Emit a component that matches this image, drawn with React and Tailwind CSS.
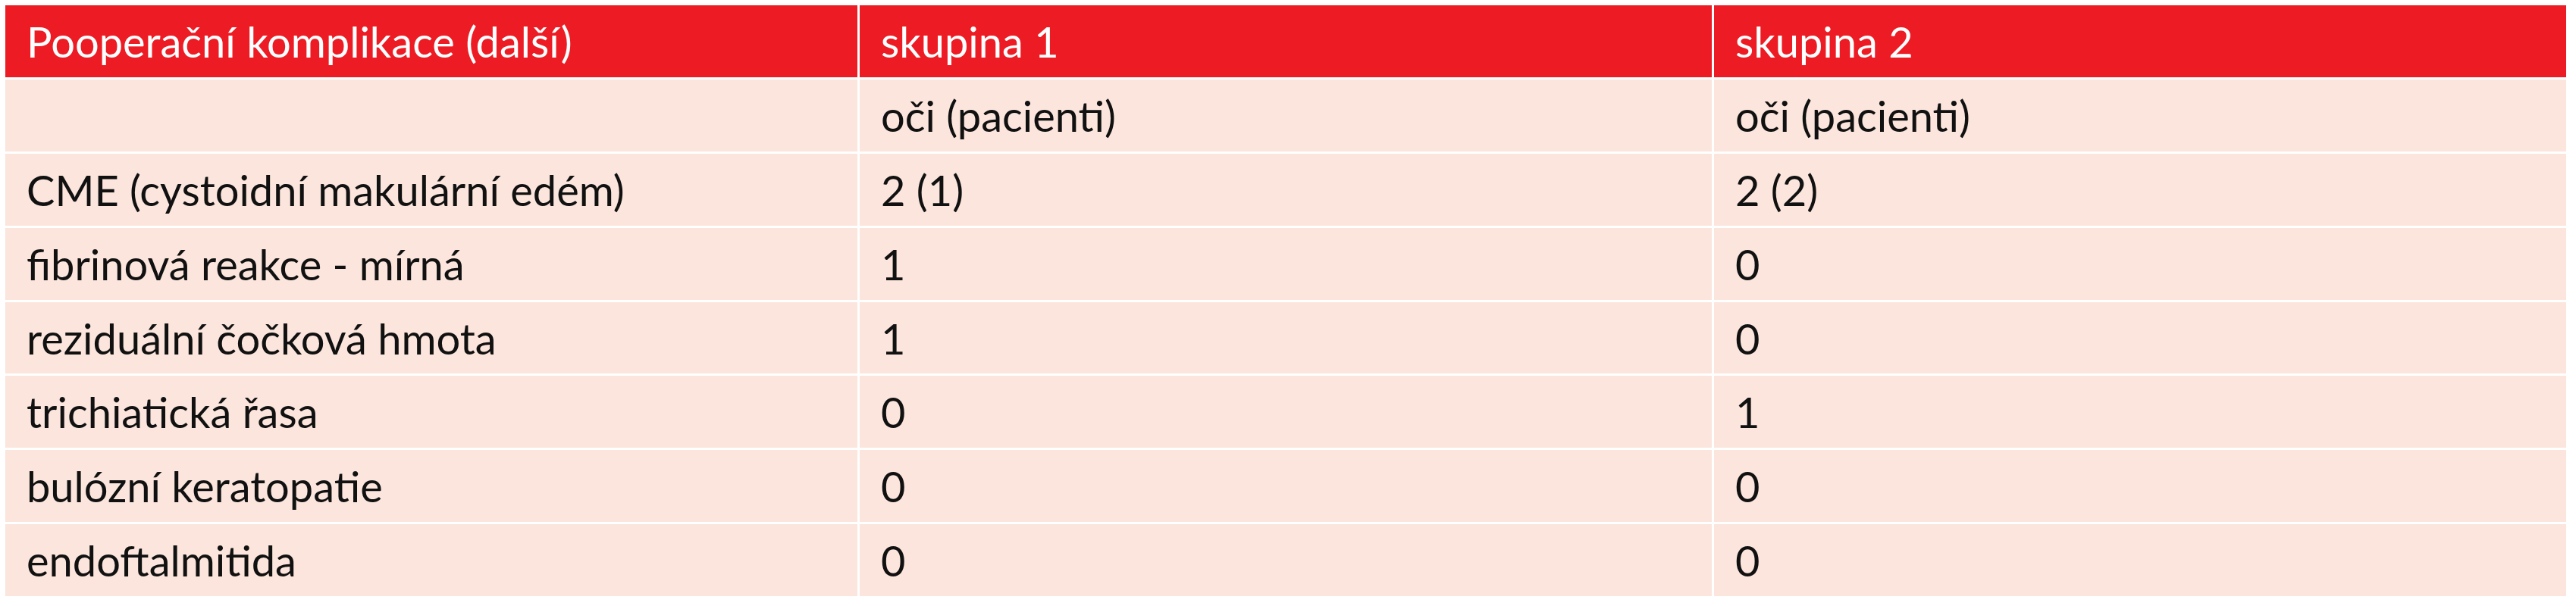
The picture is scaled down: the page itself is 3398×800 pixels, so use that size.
import React from "react";

const rows = [
  ["", "oči (pacienti)", "oči (pacienti)"],
  ["CME (cystoidní makulární edém)", "2 (1)", "2 (2)"],
  ["fibrinová reakce - mírná", "1", "0"],
  ["reziduální čočková hmota", "1", "0"],
  ["trichiatická řasa", "0", "1"],
  ["bulózní keratopatie", "0", "0"],
  ["endoftalmitida", "0", "0"],
];

const cell = "h-[94.9px] pl-[28px] pt-[20px] leading-[56px] text-[56px] whitespace-nowrap";

export default function App() {
  return (
    <div className="w-[3398px] h-[800px] bg-white pt-[7px] pl-[7px] font-['Lato',sans-serif]">
      <div className="w-[3378px] grid grid-cols-3 gap-[3px]">
        {["Pooperační komplikace (další)", "skupina 1", "skupina 2"].map((h) => (
          <div key={h} className={`${cell} bg-[#ED1C24] text-white`}>
            {h}
          </div>
        ))}
        {rows.map((r, i) =>
          r.map((c, j) => (
            <div key={i + "-" + j} className={`${cell} bg-[#FBE5DC] text-[#111]`}>
              {c}
            </div>
          ))
        )}
      </div>
    </div>
  );
}
